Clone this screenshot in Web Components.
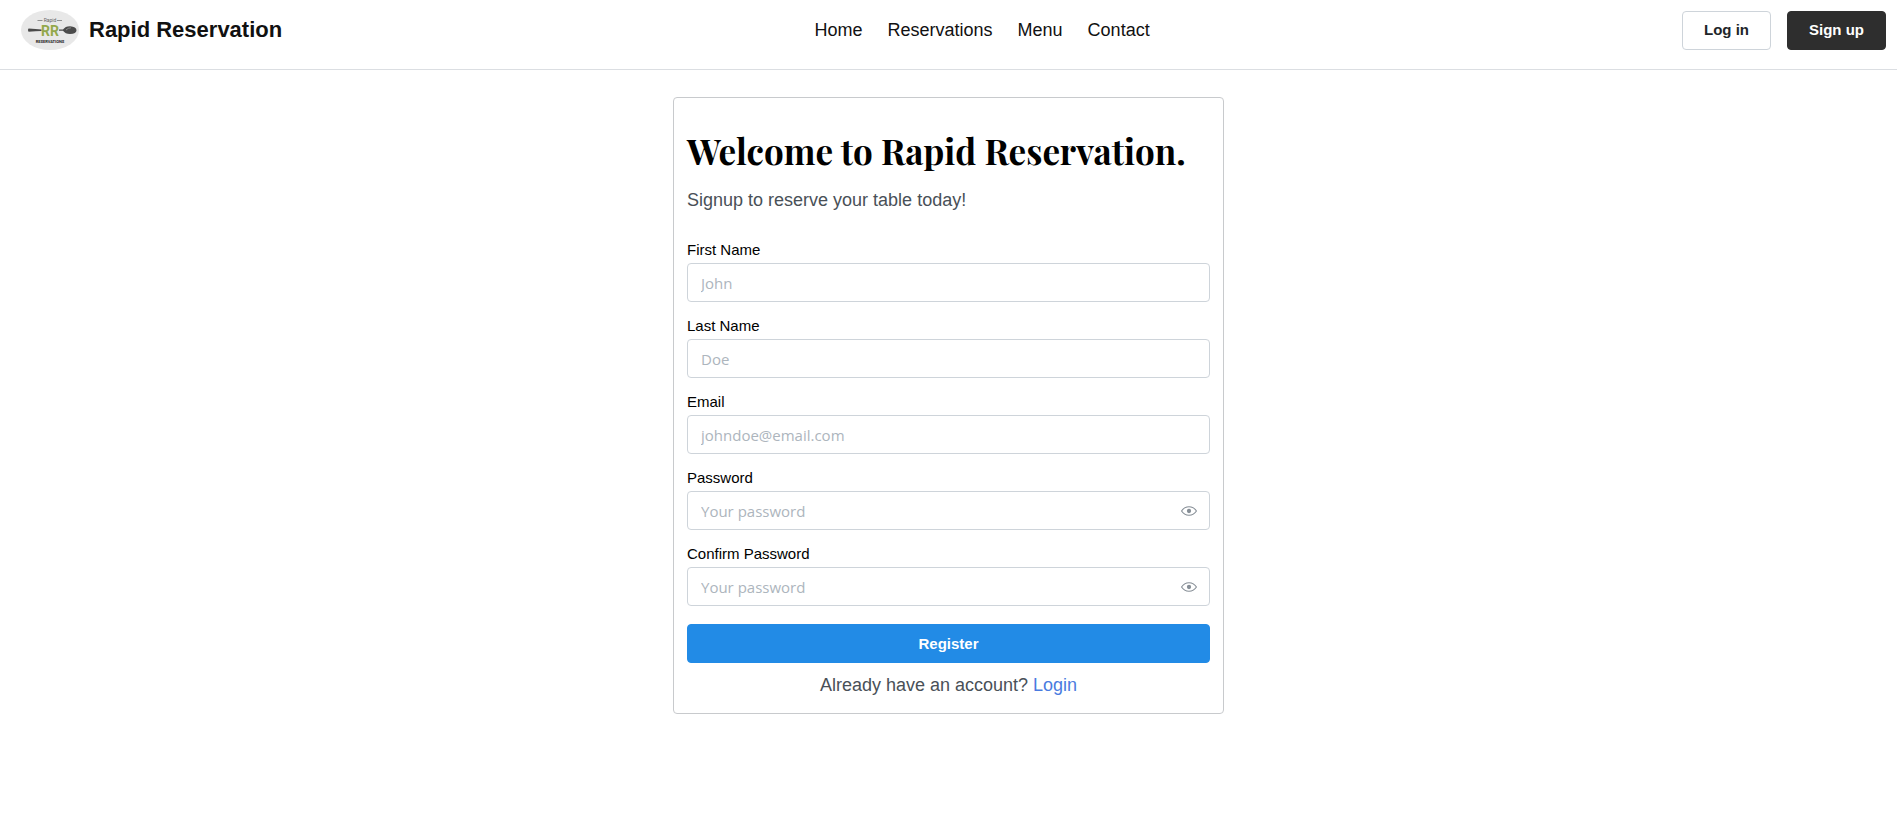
<!DOCTYPE html>
<html lang="en">
<head>
<meta charset="utf-8">
<meta name="viewport" content="width=device-width, initial-scale=1">
<title>Rapid Reservation</title>
<style>
  body { margin: 0; background: #fff; color: #111; font-family: "Liberation Sans", Arial, sans-serif; }
</style>
</head>
<body>
<site-header>
  <nav-link href="#home">Home</nav-link>
  <nav-link href="#reservations">Reservations</nav-link>
  <nav-link href="#menu">Menu</nav-link>
  <nav-link href="#contact">Contact</nav-link>
  <action-button slot="actions">Log in</action-button>
  <action-button slot="actions" variant="dark">Sign up</action-button>
</site-header>
<main>
  <signup-card></signup-card>
</main>

<script>
const define = (name, html, setup) => {
  const template = document.createElement('template');
  template.innerHTML = html;
  customElements.define(name, class extends HTMLElement {
    constructor() {
      super();
      this.attachShadow({ mode: 'open' }).append(template.content.cloneNode(true));
    }
    connectedCallback() { if (setup) setup(this, this.shadowRoot); }
  });
};

define('brand-logo', `
  <style>
    :host { display: block; }
    svg { display: block; }
    text { text-anchor: middle; font-family: Roboto, "Liberation Sans", sans-serif; }
  </style>
  <svg width="58" height="40" viewBox="0 0 58 40" role="img" aria-label="Rapid Reservations logo">
    <ellipse cx="29" cy="20" rx="29" ry="20" fill="#e8e8e8"/>
    <path d="M16.500 10.500h5M36 10.500h5" stroke="#777" stroke-width=".8"/>
    <text x="29" y="12" font-size="5" fill="#666">Rapid</text>
    <path d="M7.500 18.500l7 .4 6 .6v1.400l-6 .4-7 .4q-1.200-1.600 0-3.200z" fill="#4b4b4b"/>
    <path d="M38 19.600h4q2.200-3.400 7-3.400 6.500.6 6.500 4.100t-6.500 3.800q-4.800-.2-7-3.300H38z" fill="#4b4b4b"/>
    <path d="M45 20q2-2.200 5-2.200" stroke="#999" stroke-width=".8" fill="none"/>
    <text x="29" y="26" font-size="14" font-weight="700" fill="#93a84b">RR</text>
    <text x="29" y="33" font-size="4" font-weight="700" fill="#222">RESERVATIONS</text>
  </svg>`);

define('nav-link', `
  <style>
    :host { display: block; }
    a { color: inherit; text-decoration: none; font-size: 18px; line-height: 28px; }
  </style>
  <a><slot></slot></a>`,
  (host, root) => { root.querySelector('a').href = host.getAttribute('href'); });

define('action-button', `
  <style>
    :host { display: block; }
    button {
      box-sizing: border-box; width: 100%; height: 39px; padding: 0 21px;
      border: 1px solid #ced4da; border-radius: 4px; background: #fff; color: #212529;
      font: 700 15px/20px "Liberation Sans", Arial, sans-serif; cursor: pointer;
    }
    :host([variant="dark"]) button { background: #2e2e2e; border-color: #2e2e2e; color: #fff; }
    :host([variant="primary"]) button { background: #228be6; border-color: #228be6; color: #fff; }
  </style>
  <button type="button"><slot></slot></button>`);

define('site-header', `
  <style>
    :host { display: block; }
    header {
      display: flex; align-items: center; justify-content: space-between;
      padding: 10px 11px 19px 21px; border-bottom: 1px solid #dbdee2;
    }
    .brand { display: flex; align-items: center; gap: 10px; color: inherit; text-decoration: none; }
    .name { font-size: 22px; line-height: 28px; font-weight: 700; }
    nav { display: flex; gap: 25px; }
    .actions { display: flex; gap: 16px; }
  </style>
  <header>
    <a class="brand" href="#home"><brand-logo></brand-logo><span class="name">Rapid Reservation</span></a>
    <nav><slot></slot></nav>
    <div class="actions"><slot name="actions"></slot></div>
  </header>`);

define('text-field', `
  <style>
    :host { display: block; }
    label { display: block; color: #000; font-size: 15px; line-height: 27px; }
    .box { display: flex; align-items: center; box-sizing: border-box; height: 39px; border: 1px solid #ced4da; border-radius: 4px; background: #fff; }
    input {
      flex: 1; min-width: 0; box-sizing: border-box; height: 100%; padding: 0 13px; border: 0; outline: 0;
      background: none; color: #000; font: 15px/20px "Open Sans", sans-serif;
    }
    input::placeholder { color: #adb5bd; opacity: 1; }
    button { display: flex; padding: 0 12px; border: 0; background: none; color: #868e96; cursor: pointer; }
    button[hidden] { display: none; }
  </style>
  <label for="field"></label>
  <div class="box">
    <input id="field">
    <button type="button" aria-label="Show password" hidden>
      <svg width="16" height="16" viewBox="0 0 15 15" fill="currentColor" aria-hidden="true"><path fill-rule="evenodd" clip-rule="evenodd" d="M7.5 11C4.803 11 2.530 9.622 1.096 7.500C2.530 5.378 4.803 4 7.5 4C10.197 4 12.470 5.378 13.904 7.500C12.470 9.622 10.197 11 7.5 11ZM7.5 3C4.308 3 1.656 4.706.076 7.235C-.025 7.397-.025 7.603.076 7.765C1.656 10.294 4.308 12 7.5 12C10.692 12 13.344 10.294 14.924 7.765C15.025 7.603 15.025 7.397 14.924 7.235C13.344 4.706 10.692 3 7.5 3ZM7.5 9.500A2 2 0 1 0 7.5 5.500A2 2 0 0 0 7.5 9.500Z"/></svg>
    </button>
  </div>`,
  (host, root) => {
    const input = root.querySelector('input');
    const toggle = root.querySelector('button');
    root.querySelector('label').textContent = host.getAttribute('label');
    input.type = host.getAttribute('type') || 'text';
    input.placeholder = host.getAttribute('placeholder');
    toggle.hidden = input.type !== 'password';
    toggle.onclick = () => { input.type = input.type === 'password' ? 'text' : 'password'; };
  });

define('signup-card', `
  <style>
    :host { display: block; box-sizing: border-box; max-width: 551px; margin: 27px auto 0; padding: 31px 13px 14px; border: 1px solid #c8cacd; border-radius: 4px; }
    h1 { margin: 0; color: #000; font: 700 35px/44px "Playfair Display", "Liberation Serif", serif; }
    p { margin: 0; color: #495057; font-size: 18px; line-height: 28px; }
    .lead { margin-top: 13px; }
    form { display: grid; gap: 10px; margin-top: 22px; }
    action-button { margin-top: 8px; }
    .login { margin-top: 8px; text-align: center; }
    .login a { color: #4a7be0; text-decoration: none; }
  </style>
  <h1>Welcome to Rapid Reservation.</h1>
  <p class="lead">Signup to reserve your table today!</p>
  <form>
    <text-field label="First Name" placeholder="John"></text-field>
    <text-field label="Last Name" placeholder="Doe"></text-field>
    <text-field label="Email" type="email" placeholder="johndoe@email.com"></text-field>
    <text-field label="Password" type="password" placeholder="Your password"></text-field>
    <text-field label="Confirm Password" type="password" placeholder="Your password"></text-field>
    <action-button variant="primary">Register</action-button>
  </form>
  <p class="login">Already have an account? <a href="#login">Login</a></p>`);
</script>
</body>
</html>
